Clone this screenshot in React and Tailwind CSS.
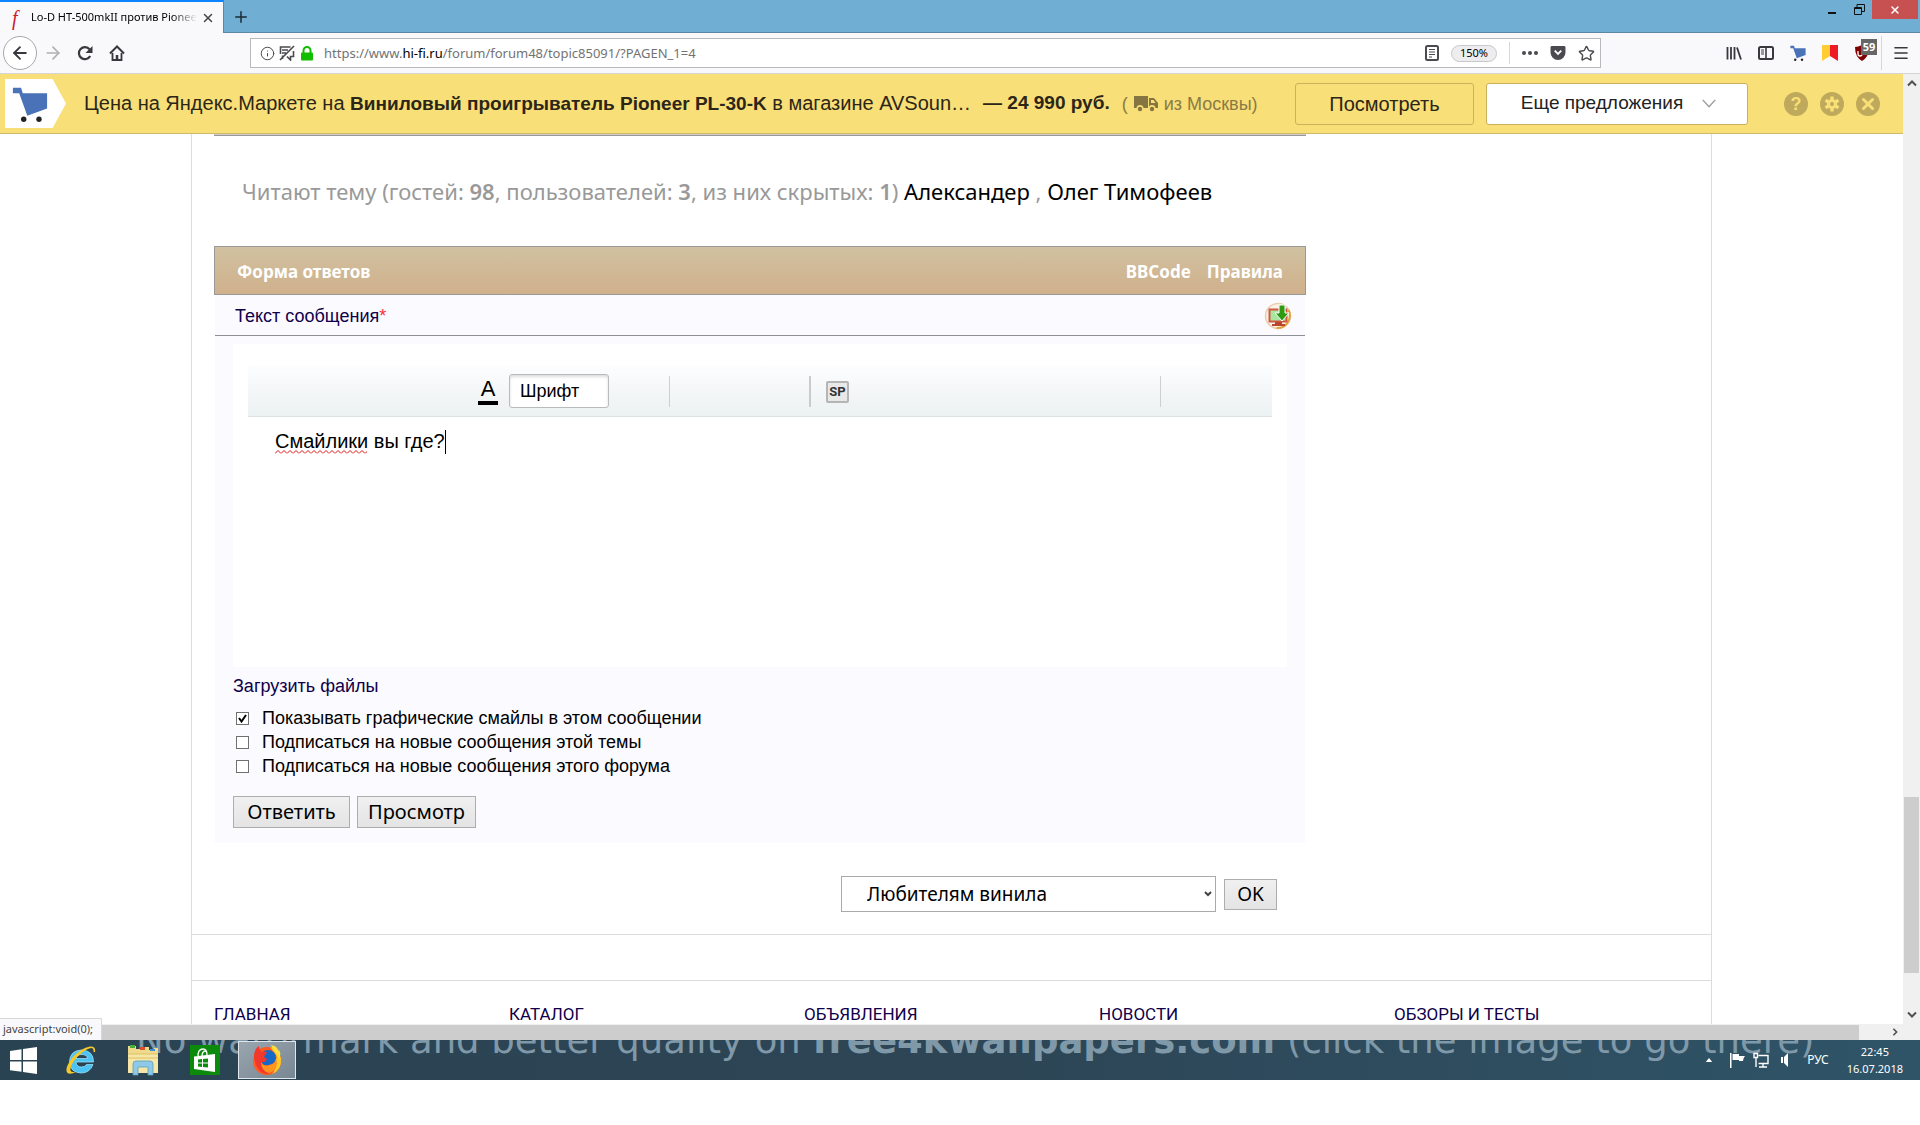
import { useState } from 'react';
import { ArrowLeft, ArrowRight, Info, Star, Menu, X, Plus } from 'lucide-react';

const footerLinks = ['ГЛАВНАЯ', 'КАТАЛОГ', 'ОБЪЯВЛЕНИЯ', 'НОВОСТИ', 'ОБЗОРЫ И ТЕСТЫ'];

const subscriptions = [
  { id: 'smiles', label: 'Показывать графические смайлы в этом сообщении', checked: true },
  { id: 'topic', label: 'Подписаться на новые сообщения этой темы', checked: false },
  { id: 'forum', label: 'Подписаться на новые сообщения этого форума', checked: false },
];

function CartIcon({ className }) {
  return (
    <svg viewBox="0 0 40 40" className={className}>
      <path d="M1 2h9l2 6h27v17l-22 8L8 8H1z" fill="#4a72b8" />
      <circle cx="13" cy="37" r="3" fill="#222" />
      <circle cx="30" cy="37" r="3" fill="#222" />
    </svg>
  );
}

function TabStrip() {
  return (
    <div className="flex h-[33px] items-start justify-between border-b border-[#5f87a3] bg-[#71aed4]">
      <div className="flex items-center">
        <div className="flex h-[33px] w-[224px] items-center border-t-2 border-r border-[#0a84ff] border-r-[#5f87a3] bg-[#f9f9fb] pr-2 pl-3">
          <span className="w-[19px] font-['Liberation_Serif'] text-xl leading-5 text-[#c8202f] italic">f</span>
          <span className="flex-1 overflow-hidden bg-linear-to-r from-black from-85% to-transparent bg-clip-text font-['Noto_Sans'] text-[11px] whitespace-nowrap text-transparent">
            Lo-D HT-500mkII против Pioneer
          </span>
          <button type="button" aria-label="Закрыть вкладку" className="ml-1 text-[#444]">
            <X size={14} strokeWidth={2.5} />
          </button>
        </div>
        <button type="button" aria-label="Новая вкладка" className="ml-2 text-[#1d2a33]">
          <Plus size={18} strokeWidth={2} />
        </button>
      </div>
      <div className="flex items-center pr-[2px]">
        <button type="button" aria-label="Свернуть" className="flex h-[19px] w-[28px] items-center justify-center">
          <svg viewBox="0 0 10 10" className="size-[10px]"><path d="M1 8h8" stroke="#111" strokeWidth="2" /></svg>
        </button>
        <button type="button" aria-label="Развернуть" className="flex h-[19px] w-[26px] items-center justify-center">
          <svg viewBox="0 0 11 11" className="size-[11px]" fill="none" stroke="#111">
            <path d="M.5 3.5h7v7h-7zM.5 4.5h7M3 3V.5h7.500v7H8" />
          </svg>
        </button>
        <button type="button" aria-label="Закрыть" className="flex h-[19px] w-[46px] items-center justify-center bg-[#c75050] text-white">
          <X size={12} strokeWidth={3} />
        </button>
      </div>
    </div>
  );
}

function NavBar() {
  return (
    <div className="flex h-[41px] items-center border-b border-[#d5d5d8] bg-[#f9f9fb] text-[#38383d]">
      <button type="button" aria-label="Назад" className="ml-[3px] flex size-[34px] items-center justify-center rounded-full border border-[#a8a8aa] bg-white">
        <ArrowLeft size={20} strokeWidth={2.2} />
      </button>
      <button type="button" aria-label="Вперёд" className="ml-[6px] text-[#b0b0b3]">
        <ArrowRight size={20} />
      </button>
      <button type="button" aria-label="Обновить" className="ml-[14px]">
        <svg viewBox="0 0 16 16" className="size-4">
          <path d="M13.200 11a6 6 0 1 1-.6-6.600" fill="none" stroke="currentColor" strokeWidth="2.200" />
          <path d="M15.500 1v7h-7z" fill="currentColor" />
        </svg>
      </button>
      <button type="button" aria-label="Домой" className="ml-4">
        <svg viewBox="0 0 16 16" className="size-4" fill="none" stroke="currentColor">
          <path d="M1 8.500 8 1.500l7 7" strokeWidth="2" />
          <path d="M3.500 8v7h9V8" strokeWidth="1.800" />
          <path d="M8 15v-5" strokeWidth="2.500" />
        </svg>
      </button>
      <div className="ml-[125px] flex h-[30px] flex-1 items-center border border-[#b9b9bd] bg-white pl-[9px] text-[#4a4a4f]">
        <Info size={15} strokeWidth={1.6} />
        <svg viewBox="0 0 16 16" className="ml-1 size-4" fill="none" stroke="currentColor" strokeWidth="1.600">
          <path d="M14.500 6v5.500h-3V15l-3.500-3.500M1.500 9V2h10M3 5h6M3 8h4M1 15 15 1M3.500 10.500v3.500" />
        </svg>
        <svg viewBox="0 0 12 15" className="ml-[6px] h-[15px] w-3">
          <path d="M2.500 7V4.500a3.500 3.500 0 0 1 7 0V7" fill="none" stroke="#12bc00" strokeWidth="2" />
          <rect x="0" y="6.500" width="12" height="8" rx="1" fill="#12bc00" />
        </svg>
        <a href="#top" className="ml-[11px] flex-1 pt-px font-['Noto_Sans'] text-[13px] text-[#737373]">
          https://www.<span className="text-black">hi-fi.ru</span>/forum/forum48/topic85091/?PAGEN_1=4
        </a>
        <svg viewBox="0 0 14 16" className="h-4 w-[14px]" fill="none" stroke="currentColor">
          <rect x="1" y="1" width="12" height="14" rx="1.500" strokeWidth="2" />
          <path d="M4 4.500h6M4 7h6M4 9.500h6M4 12h3" />
        </svg>
        <span className="ml-3 flex h-[17px] w-[46px] items-center justify-center rounded-full border border-[#c8c8cb] bg-[#ededf0] font-['Noto_Sans'] text-[11px] text-black">
          150%
        </span>
        <span className="ml-3 h-[22px] w-px bg-[#d7d7db]" />
        <svg viewBox="0 0 16 4" className="ml-3 h-1 w-4" fill="currentColor">
          <circle cx="2" cy="2" r="2" /><circle cx="8" cy="2" r="2" /><circle cx="14" cy="2" r="2" />
        </svg>
        <svg viewBox="0 0 16 15" className="ml-3 h-[14px] w-4">
          <path d="M1.500 0h13Q16 0 16 1.500V7a8 8 0 0 1-16 0V1.500Q0 0 1.500 0z" fill="currentColor" />
          <path d="m4.500 5 3.500 3.500L11.500 5" fill="none" stroke="#fff" strokeWidth="2" />
        </svg>
        <Star size={17} strokeWidth={2} className="mr-[5px] ml-3" />
      </div>
      <div className="ml-[125px] flex items-center">
        <svg viewBox="0 0 16 16" className="size-4" stroke="currentColor" strokeWidth="1.800">
          <path d="M1.500 2v12.500M5 2v12.500M8.500 2v12.500M11 2.500l4 12" />
        </svg>
        <svg viewBox="0 0 16 16" className="ml-4 size-4" fill="none" stroke="currentColor">
          <rect x="1" y="2" width="14" height="12" rx="1.500" strokeWidth="2" />
          <path d="M8 2v12" strokeWidth="1.600" />
          <path d="M3 5h3M3 7h3M3 9h3" />
        </svg>
        <CartIcon className="ml-4 size-4" />
        <svg viewBox="0 0 16 16" className="ml-4 size-4">
          <path d="M0 0h8v11l-8 5z" fill="#ffcc33" />
          <path d="M8 0h8v16l-8-5z" fill="#ee1b24" />
        </svg>
        <span className="relative ml-4 mr-[11px]">
          <svg viewBox="0 0 16 16" className="size-4">
            <path d="M8 0q4 2 7 2 0 10-7 14Q1 12 1 2q3 0 7-2z" fill="#800000" />
            <path d="M4 6v3q0 2 2 2t2-2V6" fill="none" stroke="#fff" strokeWidth="1.300" />
          </svg>
          <span className="absolute -top-[6px] left-[7px] flex h-4 w-4 items-center justify-center bg-[#666] font-['Noto_Sans'] text-[11px] font-bold text-white">59</span>
        </span>
        <span className="h-[34px] w-px bg-[#d7d7db]" />
        <button type="button" aria-label="Меню" className="mr-[10px] ml-[10px]">
          <Menu size={18} strokeWidth={2.2} />
        </button>
      </div>
    </div>
  );
}

function MarketBar() {
  return (
    <div className="flex h-[60px] items-center border-b border-[#cdb969] bg-[#f9df77] pl-[5px] font-['Liberation_Sans',sans-serif] text-xl text-[#2b2618]">
      <div className="flex h-[49px] w-[61px] items-center bg-white pl-[7px] [clip-path:polygon(0_0,78%_0,100%_50%,78%_100%,0_100%)]">
        <CartIcon className="size-[36px]" />
      </div>
      <p className="ml-[18px] whitespace-nowrap">
        Цена на Яндекс.Маркете на <b className="text-[19px]">Виниловый проигрыватель Pioneer PL-30-K</b> в магазине AVSoun…
      </p>
      <b className="ml-3 text-[19px] whitespace-nowrap">— 24 990 руб.</b>
      <span className="ml-3 flex items-center text-lg whitespace-nowrap text-[#8a7b45]">
        (
        <svg viewBox="0 0 24 16" className="mx-[6px] h-4 w-6" fill="#857641">
          <path d="M0 0h14v12H0zM15 2h5l4 5v5h-9z" />
          <path d="M17 4h2.500l2 3H17z" fill="#f9df77" />
          <circle cx="6" cy="12.500" r="3.500" fill="#f9df77" />
          <circle cx="18" cy="12.500" r="3.500" fill="#f9df77" />
          <circle cx="6" cy="13" r="2.200" />
          <circle cx="18" cy="13" r="2.200" />
        </svg>
        из Москвы)
      </span>
      <div className="ml-auto flex items-center">
        <button type="button" className="h-[42px] w-[179px] rounded-[3px] border border-[#c9b25d]">Посмотреть</button>
        <button type="button" className="ml-3 flex h-[42px] w-[262px] items-center justify-center gap-[18px] rounded-[3px] border border-[#c9b25d] bg-white pl-1 text-[19px] text-[#222]">
          Еще предложения
          <svg viewBox="0 0 16 10" className="h-[9px] w-4" fill="none" stroke="#999" strokeWidth="1.500"><path d="m1 1 7 7.500L15 1" /></svg>
        </button>
        <div className="mr-[23px] ml-[36px] flex gap-3 text-[#b9a45a]">
          <button type="button" aria-label="Справка" className="flex size-6 items-center justify-center rounded-full bg-[#bfa95c] text-lg font-bold text-[#f9df77]">?</button>
          <button type="button" aria-label="Настройки" className="flex size-6 items-center justify-center rounded-full bg-[#bfa95c]">
            <svg viewBox="0 0 16 16" className="size-4">
              <g stroke="#f9df77" strokeWidth="3.500"><path d="M8 .5v15M1.500 4.250l13 7.500M14.500 4.250l-13 7.500" /></g>
              <circle cx="8" cy="8" r="5" fill="#f9df77" />
              <circle cx="8" cy="8" r="2" fill="#bfa95c" />
            </svg>
          </button>
          <button type="button" aria-label="Закрыть панель" className="flex size-6 items-center justify-center rounded-full bg-[#bfa95c] text-[#f9df77]">
            <X size={18} strokeWidth={4} />
          </button>
        </div>
      </div>
    </div>
  );
}

function Editor() {
  const [text, setText] = useState('Смайлики вы где?');

  return (
    <div className="bg-white px-[15px] pt-[22px]">
      <div className="flex h-[51px] items-center border-b border-[#dde3e3] bg-linear-to-b from-[#fcfdfe] to-[#ecf1f2] pl-[230px]">
        <button type="button" className="w-[20px] border-b-4 border-black font-['Liberation_Sans'] text-[22px] leading-6">A</button>
        <select aria-label="Шрифт" className="ml-[11px] h-[34px] w-[100px] appearance-none rounded-[3px] border border-[#b8bcbd] bg-white pl-[10px] font-['Liberation_Sans'] text-lg shadow-[inset_0_2px_3px_#ddd]">
          <option>Шрифт</option>
        </select>
        <span className="ml-[60px] h-[31px] w-px bg-[#ccd0d1]" />
        <span className="ml-[139px] h-[31px] w-[2px] bg-[#c9cccd]" />
        <button type="button" className="mt-[2px] ml-[15px] h-[22px] w-[23px] rounded-[2px] border-2 border-[#b5b5b5] bg-[#e8e8e8] font-['Roboto'] text-[13px] leading-4 font-bold text-[#333]">SP</button>
        <span className="ml-[311px] h-[31px] w-px bg-[#ccd0d1]" />
      </div>
      <div className="relative">
        <textarea
          aria-label="Текст сообщения"
          spellCheck={false}
          value={text}
          onChange={(e) => setText(e.target.value)}
          className="block h-[250px] w-full resize-none px-[27px] pt-[10px] font-['Liberation_Sans'] text-xl leading-7 text-black outline-none"
        />
        {/* spelling mark and caret */}
        <svg className="absolute top-[33px] left-[27px] h-[4px] w-[92px]">
          <defs>
            <pattern id="wave" width="6" height="4" patternUnits="userSpaceOnUse">
              <path d="M0 3.500 3 .5l3 3" fill="none" stroke="#e01010" />
            </pattern>
          </defs>
          <rect width="92" height="4" fill="url(#wave)" />
        </svg>
        <span className="absolute top-[13px] left-[197px] h-6 w-px bg-black" />
      </div>
    </div>
  );
}

function ReplyForm() {
  const [checks, setChecks] = useState(subscriptions);

  const toggle = (id) => {
    setChecks(prev => prev.map(c => (c.id === id ? { ...c, checked: !c.checked } : c)));
  };

  return (
    <form onSubmit={(e) => e.preventDefault()} className="mt-[39px]">
      <div className="flex h-[49px] items-center justify-between border border-[#999] bg-linear-to-b from-[#d0c1a0] to-[#d0b08c] px-[22px] pt-[2px] font-['Noto_Sans'] text-[17px] font-bold text-white">
        <span>Форма ответов</span>
        <nav className="flex gap-4">
          <a href="#bbcode">BBCode</a>
          <a href="#rules">Правила</a>
        </nav>
      </div>
      <div className="mx-px bg-[#fafaff] font-['Liberation_Sans',sans-serif] text-lg">
        <div className="flex h-[41px] items-center justify-between border-b border-[#8e9098] pt-[2px] pr-[13px] pl-[20px] text-[#10004a]">
          <span>Текст сообщения<span className="text-red-500">*</span></span>
          <button type="button" aria-label="Развернуть редактор">
            <svg viewBox="0 0 28 28" className="size-7">
              <circle cx="14" cy="14" r="12.500" fill="#fbf1e4" stroke="#e9cdb0" strokeWidth="1.500" />
              <path d="M24.500 8a12.500 12.500 0 0 1-12 18" fill="none" stroke="#e3a13c" strokeWidth="2" />
              <rect x="5.500" y="7.500" width="17" height="12" fill="#a9e6a0" stroke="#cf5744" strokeWidth="2" />
              <path d="M11 20h7v2h3v2H8v-2h3z" fill="#b9452f" />
              <path d="M15 3h6v8h4l-7 8-7-8h4z" fill="#2d9a12" stroke="#fff" />
            </svg>
          </button>
        </div>
        <div className="px-[18px] pt-2 pb-[15px]">
          <Editor />
          <a href="#upload" className="mt-[5px] block leading-7 text-[#10004a]">Загрузить файлы</a>
          <div className="mt-[6px]">
            {checks.map(c => (
              <label key={c.id} className="flex h-6 items-center text-black">
                <input
                  type="checkbox"
                  checked={c.checked}
                  onChange={() => toggle(c.id)}
                  className="peer mr-[13px] ml-[3px] size-[13px] appearance-none border border-[#707070] bg-white"
                />
                <svg viewBox="0 0 13 13" className="invisible -ml-[26px] mr-[13px] size-[13px] peer-checked:visible">
                  <path d="m3 6 2.500 3.500L10 3" fill="none" stroke="#000" strokeWidth="2" />
                </svg>
                {c.label}
              </label>
            ))}
          </div>
          <div className="mt-[18px] flex gap-[7px] font-['Noto_Sans'] text-xl text-black">
            <button type="submit" className="h-8 w-[117px] border border-[#adadad] bg-linear-to-b from-[#f0f0f0] to-[#e4e4e4] leading-7">Ответить</button>
            <button type="button" className="h-8 w-[119px] border border-[#adadad] bg-linear-to-b from-[#f0f0f0] to-[#e4e4e4] leading-7">Просмотр</button>
          </div>
        </div>
      </div>
    </form>
  );
}

function ForumPage() {
  return (
    <div className="min-w-0 flex-1">
      <MarketBar />
      <div className="mx-auto w-full max-w-[1521px] border-x border-[#dcdcdc]">
        <div className="ml-[22px] w-[1092px] pb-[22px]">
          <div className="h-[2px] border-b border-[#999] bg-[#d5cdc8]" />
          <p className="mt-[39px] ml-7 font-['Noto_Sans'] text-[22px] leading-8 whitespace-nowrap text-[#999]">
            Читают тему (гостей: <b className="font-semibold">98</b>, пользователей: <b className="font-semibold">3</b>, из них скрытых: <b className="font-semibold">1</b>){' '}
            <a href="#user1" className="text-black">Александер</a> , <a href="#user2" className="text-black">Олег Тимофеев</a>
          </p>
          <ReplyForm />
          <div className="mt-[33px] mr-[29px] flex items-center justify-end gap-2 font-['Noto_Sans'] text-xl">
            <div className="relative">
              <select aria-label="Форум" className="block h-9 w-[375px] appearance-none border border-[#aaa] bg-white pl-[25px] text-[19px] leading-7">
                <option>Любителям винила</option>
              </select>
              <svg viewBox="0 0 8 6" className="absolute top-[15px] right-1 h-[6px] w-2" fill="none" stroke="#444" strokeWidth="2"><path d="m1 1 3 3 3-3" /></svg>
            </div>
            <button type="button" className="h-[31px] w-[53px] border border-[#adadad] bg-linear-to-b from-[#f0f0f0] to-[#e4e4e4] text-[19px] leading-7">OK</button>
          </div>
        </div>
        <div className="h-[46px] border-t border-[#dcdcdc]" />
        <footer className="grid grid-cols-5 border-t border-[#dcdcdc] px-[22px] pt-[24px] font-['Roboto'] text-[17px] leading-[19px] text-[#10004a]">
          {footerLinks.map(link => <a key={link} href="#section">{link}</a>)}
        </footer>
      </div>
    </div>
  );
}

function VerticalScrollbar() {
  return (
    <div className="flex w-[17px] flex-col items-center justify-between bg-[#f0f0f0] py-[6px]">
      <svg viewBox="0 0 10 7" className="h-[7px] w-[10px]" fill="none" stroke="#505050" strokeWidth="2"><path d="m1 5.500 4-4 4 4" /></svg>
      <div className="mt-auto mb-[38px] h-[176px] w-[15px] bg-[#cdcdcd]" />
      <svg viewBox="0 0 10 7" className="h-[7px] w-[10px]" fill="none" stroke="#505050" strokeWidth="2"><path d="m1 1.500 4 4 4-4" /></svg>
    </div>
  );
}

function Taskbar() {
  return (
    <div className="relative flex h-10 items-center overflow-hidden bg-linear-to-r from-[#2a4353] via-[#2d4555] to-[#2f5468] font-['Noto_Sans'] text-white">
      <p className="absolute -top-[19px] left-[136px] font-['DejaVu_Sans'] text-[37px] leading-10 whitespace-nowrap text-[#8099a9]">
        No watermark and better quality on <b>free4kwallpapers.com</b> (click the image to go there)
      </p>
      <div className="relative flex h-full flex-1 items-center">
        <button type="button" aria-label="Пуск" className="ml-[10px]">
          <svg viewBox="0 0 27 27" className="size-[27px]" fill="#fff">
            <path d="M0 4 11.500 2.300v10.700H0zM13 2.100 27 0v13H13zM0 14.500h11.500v10.300L0 23.200zM13 14.500h14V27l-14-2z" />
          </svg>
        </button>
        <button type="button" aria-label="Internet Explorer" className="ml-[28px]">
          <svg viewBox="0 0 32 32" className="size-8">
            <path d="M28.500 18H11q.5 5 5.500 5 3.500 0 5-2.500h6.500Q25 29 16 29 5 28.500 4.500 17.500 5 6.500 16.500 6 28.500 6.500 28.500 18zM11 14.500h11.500q-.5-4-5.700-4-5 0-5.800 4z" fill="#4cc3f5" stroke="#a9e6fb" strokeWidth=".7" />
            <path d="M30 8q1-6-5-5.500Q16 4 7 14-1 25 2.500 29q3 2 9-1.500-5 1.500-6-1Q4.500 22 12 13q8-8 14-9 3 0 2.500 4z" fill="#f6c829" />
          </svg>
        </button>
        <button type="button" aria-label="Проводник" className="ml-[30px]">
          <svg viewBox="0 0 32 32" className="size-8">
            <path d="M1 5V2h8v3h5V3h8v3h5V4h4v25H1z" fill="#efd98a" />
            <path d="M3 1h5v3H3z" fill="#49ad3a" /><path d="M13 3h5v3h-5z" fill="#d94f2b" /><path d="M23 5h5v2h-5z" fill="#3f8fd6" />
            <path d="M1 10h30v19H1z" fill="#f7e7a6" />
            <path d="M1 10h30M1 14h30" stroke="#dcbf63" />
            <path d="M6 31V20q0-3 3-3h14q3 0 3 3v11h-5v-8H11v8z" fill="#8fc9e8" stroke="#5c9ebf" strokeWidth=".8" />
          </svg>
        </button>
        <button type="button" aria-label="Магазин" className="ml-[31px]">
          <svg viewBox="0 0 30 30" className="size-[30px]">
            <path d="M0 0h30v30H0z" fill="#0b8a0b" />
            <path d="M4 11.500 25 9v18L4 24z" fill="#fff" />
            <path d="M8 11q0-7 5-7 4 0 4 6M12 11q0-5 4-5" fill="none" stroke="#fff" strokeWidth="1.300" />
            <path d="m8 14.500 4-.5v3.500H8zM13 14l5-.6v4.100h-5zM8 18.500h4V22l-4-.5zM13 18.500h5v4.100l-5-.6z" fill="#0b8a0b" />
          </svg>
        </button>
        <button type="button" aria-label="Firefox" className="ml-[18px] flex h-[38px] w-[58px] items-center justify-center border border-[#e0e6ea] bg-linear-to-br from-[#9aa5ae] to-[#788793]">
          <svg viewBox="0 0 32 32" className="size-8">
            <circle cx="16" cy="17" r="14" fill="#ff5a1f" />
            <path d="M19 3q8 3 11 11 1 12-9 16 6-7 2-14 4 0 2-5z" fill="#ffc928" />
            <circle cx="17" cy="14" r="8" fill="#1468c7" />
            <path d="M3 13Q3 5 8 2q0 4 3 6 3-1 5 0-1 3-3 4 0 2 3 3-2 4-6 3 3 5 8 3 6-1 7-6 2 12-9 15Q5 28 3 13z" fill="#f2372b" />
            <path d="M10 18q3 5 8 3 6-1 7-6 3 11-7 14-8-2-8-11z" fill="#ff9420" />
            <path d="M20 1q2 6 6 9 2 3 1 6 4-5 1-10-1 1-1 0-1-4-7-5z" fill="#ffdd3c" />
          </svg>
        </button>
      </div>
      <div className="relative flex items-center pr-[17px] text-[12px]">
        <svg viewBox="0 0 8 5" className="h-1 w-2" fill="#fff"><path d="m0 5 4-5 4 5z" /></svg>
        <svg viewBox="0 0 16 16" className="ml-4 size-4" fill="#fff"><path d="M1 1h1.500v15H1zM3.500 2H10v6H3.500zM11 4h5q-2 2-2 5h-4V4z" /></svg>
        <svg viewBox="0 0 16 16" className="ml-2 size-4" fill="none" stroke="#fff" strokeWidth="1.400"><path d="M5.500 3.500h9.500v8H5.500M10 12v3M6 15h8M1 1.500h3.500v4H1zM3 6v9" /></svg>
        <svg viewBox="0 0 16 16" className="ml-[10px] size-4" fill="#fff"><path d="M2 5h2v6H2zM5 5l4-4v14l-4-4z" /></svg>
        <span className="ml-3">РУС</span>
        <div className="ml-[18px] text-center text-[11px] leading-[17px]">
          <div>22:45</div>
          <div>16.07.2018</div>
        </div>
      </div>
    </div>
  );
}

export default function App() {
  return (
    <div className="min-h-screen bg-white">
      <TabStrip />
      <NavBar />
      <div className="flex">
        <ForumPage />
        <VerticalScrollbar />
      </div>
      <div className="relative flex h-4 items-center justify-end bg-[#f0f0f0]">
        <div className="h-[15px] flex-1 bg-[#cdcdcd]" />
        <svg viewBox="0 0 7 10" className="mr-[22px] ml-[33px] h-2 w-[6px]" fill="none" stroke="#505050" strokeWidth="2"><path d="m1.500 1 4 4-4 4" /></svg>
        <div className="absolute bottom-0 left-0 h-[22px] border-t border-r border-[#d8d8d8] bg-[#f9f9fb] pr-2 pl-[3px] font-['Noto_Sans'] text-[11px] leading-5 text-[#444]">
          javascript:void(0);
        </div>
      </div>
      <Taskbar />
    </div>
  );
}
